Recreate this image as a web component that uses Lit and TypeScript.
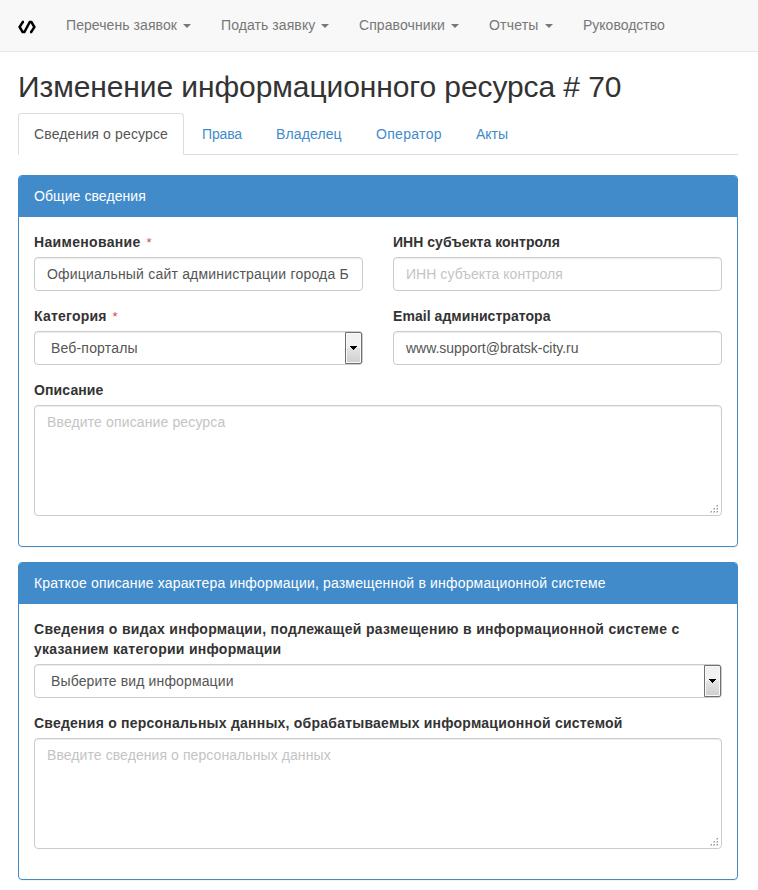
import { LitElement, html, css, svg } from "lit";
import { customElement } from "lit/decorators.js";
import { classMap } from "lit/directives/class-map.js";

const NAV = [
  { text: "Перечень заявок", menu: true, w: 155, ls: 0.07 },
  { text: "Подать заявку", menu: true, w: 138, ls: 0.08 },
  { text: "Справочники", menu: true, w: 130, ls: 0.09 },
  { text: "Отчеты", menu: true, w: 94, ls: 0.2 },
  { text: "Руководство", menu: false, w: 112, ls: 0 },
];

const TABS = [
  { text: "Сведения о ресурсе", w: 166, ls: 0.14 },
  { text: "Права", w: 72, ls: -0.15 },
  { text: "Владелец", w: 98, ls: 0.12 },
  { text: "Оператор", w: 98, ls: 0.31 },
  { text: "Акты", w: 64, ls: 0 },
];

const tracked = (text: string, ls = 0) => html`<span style="letter-spacing:${ls}px">${text}</span>`;

@customElement("app-root")
export class AppRoot extends LitElement {
  static styles = css`
    :host {
      display: block;
      height: 890px;
      overflow: hidden;
      background: #fff;
      color: #333;
      font: 14px/20px "Liberation Sans", Arial, sans-serif;
    }
    * { box-sizing: border-box; }
    .navbar {
      display: flex;
      height: 52px;
      padding-left: 18px;
      background: #f8f8f8;
      border-bottom: 1px solid #e7e7e7;
    }
    .logo { width: 18px; height: 14px; margin: 20px 15px 0 0; }
    .nav-item {
      display: flex;
      align-items: flex-start;
      padding: 15px 0 0 15px;
      color: #777;
      white-space: nowrap;
    }
    .caret {
      margin: 9px 0 0 6px;
      border-top: 4px solid #777;
      border-left: 4px solid transparent;
      border-right: 4px solid transparent;
    }
    .page { padding: 18px 20px 0 18px; }
    h1 {
      height: 33px;
      margin: 0 0 10px;
      font-size: 30px;
      line-height: 33px;
      font-weight: 400;
      white-space: nowrap;
    }
    .tabs { display: flex; border-bottom: 1px solid #ddd; height: 42px; margin-bottom: 20px; }
    .tab {
      height: 42px;
      margin-right: 2px;
      padding: 10px 15px;
      border: 1px solid transparent;
      color: #428bca;
      white-space: nowrap;
    }
    .tab.active {
      color: #555;
      background: #fff;
      border-color: #ddd #ddd #fff;
      border-radius: 4px 4px 0 0;
    }
    .panel {
      margin-bottom: 15px;
      border: 1px solid #428bca;
      border-radius: 4px;
      box-shadow: 0 1px 1px rgba(0, 0, 0, 0.05);
    }
    .heading {
      height: 41px;
      padding: 10px 15px;
      background: #428bca;
      color: #fff;
      white-space: nowrap;
      border-radius: 3px 3px 0 0;
    }
    .body { padding: 15px 15px 30px; display: grid; grid-template-columns: 1fr 1fr; gap: 15px 30px; }
    .field { min-width: 0; }
    .wide { grid-column: 1 / -1; }
    .label { font-weight: 700; margin-bottom: 5px; white-space: nowrap; }
    .req { color: #c9504c; font-weight: 400; font-size: 13px; line-height: 1; margin-left: 2px; }
    .control {
      position: relative;
      height: 34px;
      padding: 6px 12px;
      border: 1px solid #ccc;
      border-radius: 4px;
      box-shadow: inset 0 1px 1px rgba(0, 0, 0, 0.075);
      color: #555;
    }
    .value { overflow: hidden; white-space: nowrap; }
    .select { padding-left: 16px; }
    .area { height: 111px; }
    .hint { color: #c4c4c4; }
    .drop {
      position: absolute;
      top: 0;
      right: 0;
      width: 17px;
      height: 32px;
      border: 1px solid #707070;
      border-radius: 0 2px 2px 0;
      background: linear-gradient(#f2f2f2 0 48%, #e4e4e4 50%, #cfcfcf);
      box-shadow: inset 0 0 0 1px #f8f8f8;
      display: flex;
      align-items: center;
      justify-content: center;
    }
    .drop svg { width: 7px; height: 4px; }
    .grip { position: absolute; right: 2px; bottom: 2px; width: 9px; height: 8px; }
  `;

  private control(kind: string, text: string, ls = 0, hint = false) {
    return html`<div class=${classMap({ control: true, select: kind === "select", area: kind === "area" })}>
      <div class=${classMap({ value: true, hint })}>${tracked(text, ls)}</div>
      ${kind === "select"
        ? html`<span class="drop"><svg viewBox="0 0 7 4" shape-rendering="crispEdges"><path d="M0 0h7v1h-1v1h-1v1h-1v1h-1v-1h-1v-1h-1v-1h-1z" /></svg></span>`
        : ""}
      ${kind === "area"
        ? html`<svg class="grip" viewBox="0 0 9 8" shape-rendering="crispEdges">
            ${[[6, 0], [3, 3], [6, 3], [0, 6], [3, 6], [6, 6]].map(
              ([x, y]) => svg`<rect x=${x} y=${y} width="2" height="2" fill="#d8d8d8" /><rect x=${x + 1} y=${y} width="1" height="1" fill="#999" />`
            )}
          </svg>`
        : ""}
    </div>`;
  }

  private field(label: unknown, control: unknown, wide = false, required = false) {
    return html`<div class=${classMap({ field: true, wide })}>
      <div class="label">${label}${required ? html` <span class="req">*</span>` : ""}</div>
      ${control}
    </div>`;
  }

  render() {
    return html`
      <nav class="navbar">
        <svg class="logo" viewBox="0 0 18 14" fill="none" stroke="#000" stroke-width="2.5">
          <path d="M6 1.9H4.8L1.6 7l3 5H6.4L11.8 2H13.4l3 5-3.2 5.1H12" />
        </svg>
        ${NAV.map((n) => html`<a class="nav-item" style="width:${n.w}px">${tracked(n.text, n.ls)}${n.menu ? html`<i class="caret"></i>` : ""}</a>`)}
      </nav>
      <main class="page">
        <h1>${tracked("Изменение информационного ресурса # 70", -0.09)}</h1>
        <div class="tabs">
          ${TABS.map((t, i) => html`<a class=${classMap({ tab: true, active: i === 0 })} style="width:${t.w}px">${tracked(t.text, t.ls)}</a>`)}
        </div>
        <section class="panel">
          <div class="heading">${tracked("Общие сведения", 0.08)}</div>
          <div class="body">
            ${this.field(tracked("Наименование", 0.33), this.control("input", "Официальный сайт администрации города Б", 0.2), false, true)}
            ${this.field(tracked("ИНН субъекта контроля", 0.03), this.control("input", "ИНН субъекта контроля", 0.05, true))}
            ${this.field(tracked("Категория", 0.22), this.control("select", "Веб-порталы", 0.18), false, true)}
            ${this.field(tracked("Email администратора", 0.05), this.control("input", "www.support@bratsk-city.ru", -0.04))}
            ${this.field(tracked("Описание", 0.12), this.control("area", "Введите описание ресурса", 0.13, true), true)}
          </div>
        </section>
        <section class="panel">
          <div class="heading">${tracked("Краткое описание характера информации, размещенной в информационной системе", 0.173)}</div>
          <div class="body">
            ${this.field(
              html`${tracked("Сведения о видах информации, подлежащей размещению в информационной системе с", 0.305)}<br />${tracked("указанием категории информации", 0.27)}`,
              this.control("select", "Выберите вид информации", 0.13),
              true
            )}
            ${this.field(
              tracked("Сведения о персональных данных, обрабатываемых информационной системой", 0.225),
              this.control("area", "Введите сведения о персональных данных", 0.08, true),
              true
            )}
          </div>
        </section>
      </main>
    `;
  }
}
